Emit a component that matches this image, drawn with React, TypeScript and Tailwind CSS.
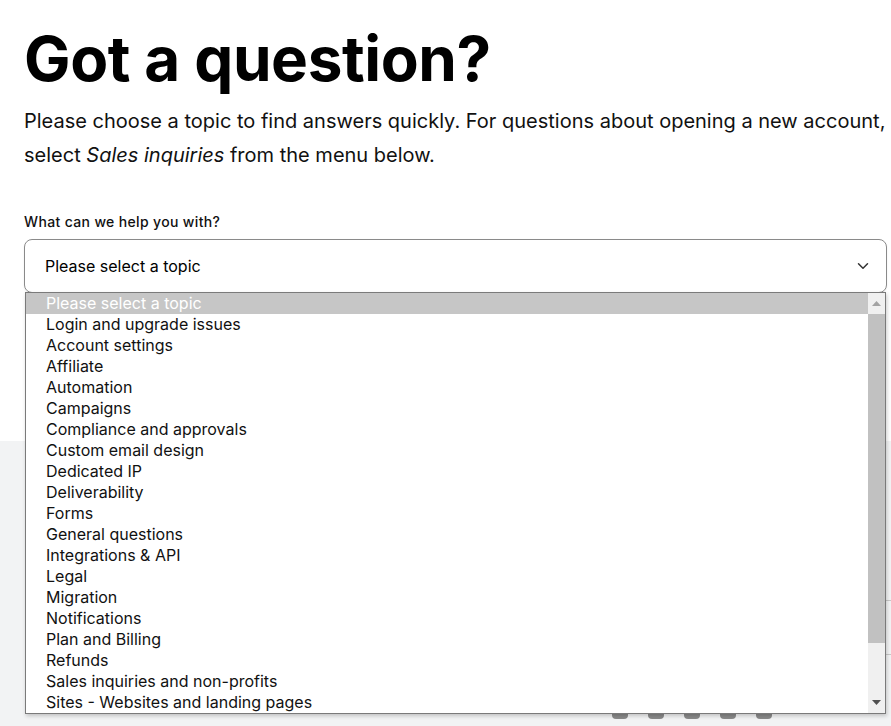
import { ChevronDown } from "lucide-react";

const topics = [
  "Please select a topic",
  "Login and upgrade issues",
  "Account settings",
  "Affiliate",
  "Automation",
  "Campaigns",
  "Compliance and approvals",
  "Custom email design",
  "Dedicated IP",
  "Deliverability",
  "Forms",
  "General questions",
  "Integrations & API",
  "Legal",
  "Migration",
  "Notifications",
  "Plan and Billing",
  "Refunds",
  "Sales inquiries and non-profits",
  "Sites - Websites and landing pages",
];

const App = () => {
  return (
    <div className="h-[726px] bg-white font-['Inter','Liberation_Sans',sans-serif] text-black overflow-hidden">
      <div className="pl-6 pr-1 pt-[23px]">
        <h1 className="text-[62px] font-bold leading-[72px] tracking-[-0.4px]">Got a question?</h1>
        <p className="mt-[9px] whitespace-nowrap text-[20px] leading-[34px] text-[#111]">
          Please choose a topic to find answers quickly. For questions about opening a new account,
          <br />
          select <em>Sales inquiries</em> from the menu below.
        </p>

        <label className="mt-[41px] block text-[14px] font-medium leading-[18px] tracking-[0.35px] text-[#111]">
          What can we help you with?
        </label>

        <div className="relative mt-[8px]">
          <div className="flex h-[54px] items-center justify-between rounded-lg border border-[#8a8a8a] pl-[20px] pr-[14px] text-[16px] shadow-[0_1px_2px_rgba(0,0,0,0.08)]">
            <span>Please select a topic</span>
            <ChevronDown className="h-[18px] w-[18px] text-[#333]" strokeWidth={2} />
          </div>

          {/* opened native list */}
          <div className="absolute left-px right-px top-[53px] z-10 flex border border-[#7a7a7a] bg-white shadow-[1px_2px_4px_rgba(0,0,0,0.2)]">
            <ul className="flex-1 text-[16px] leading-[21px] text-[#111]">
              {topics.map((t, i) => (
                <li
                  key={t}
                  className={`h-[21px] pl-[20px] ${i === 0 ? "bg-[#c6c6c6] text-white" : ""}`}
                >
                  {t}
                </li>
              ))}
            </ul>
            <div className="flex w-[17px] flex-col bg-[#f0f0f0]">
              <div className="flex h-[21px] items-center justify-center">
                <svg width="9" height="5" viewBox="0 0 9 5"><path d="M0 5 4.5 0 9 5z" fill="#a3a3a3" /></svg>
              </div>
              <div className="h-[329px] bg-[#c1c1c1]" />
              <div className="flex-1" />
              <div className="flex h-[21px] items-center justify-center">
                <svg width="9" height="5" viewBox="0 0 9 5"><path d="M0 0h9L4.5 5z" fill="#505050" /></svg>
              </div>
            </div>
          </div>
        </div>
      </div>

      <div className="relative mt-[148px] h-[300px] bg-[#f2f3f4]">
        <div className="absolute right-0 top-[159px] h-px w-[6px] bg-[#c8c8c8]" />
        <div className="absolute right-0 top-[213px] h-px w-[6px] bg-[#c8c8c8]" />
        <div className="absolute left-[612px] top-[262px] flex gap-[20px]">
          {[0, 1, 2, 3, 4].map((i) => (
            <div key={i} className="h-[16px] w-[16px] rounded-[4px] bg-[#8a8a8a]" />
          ))}
        </div>
      </div>
    </div>
  );
};

export default App;
